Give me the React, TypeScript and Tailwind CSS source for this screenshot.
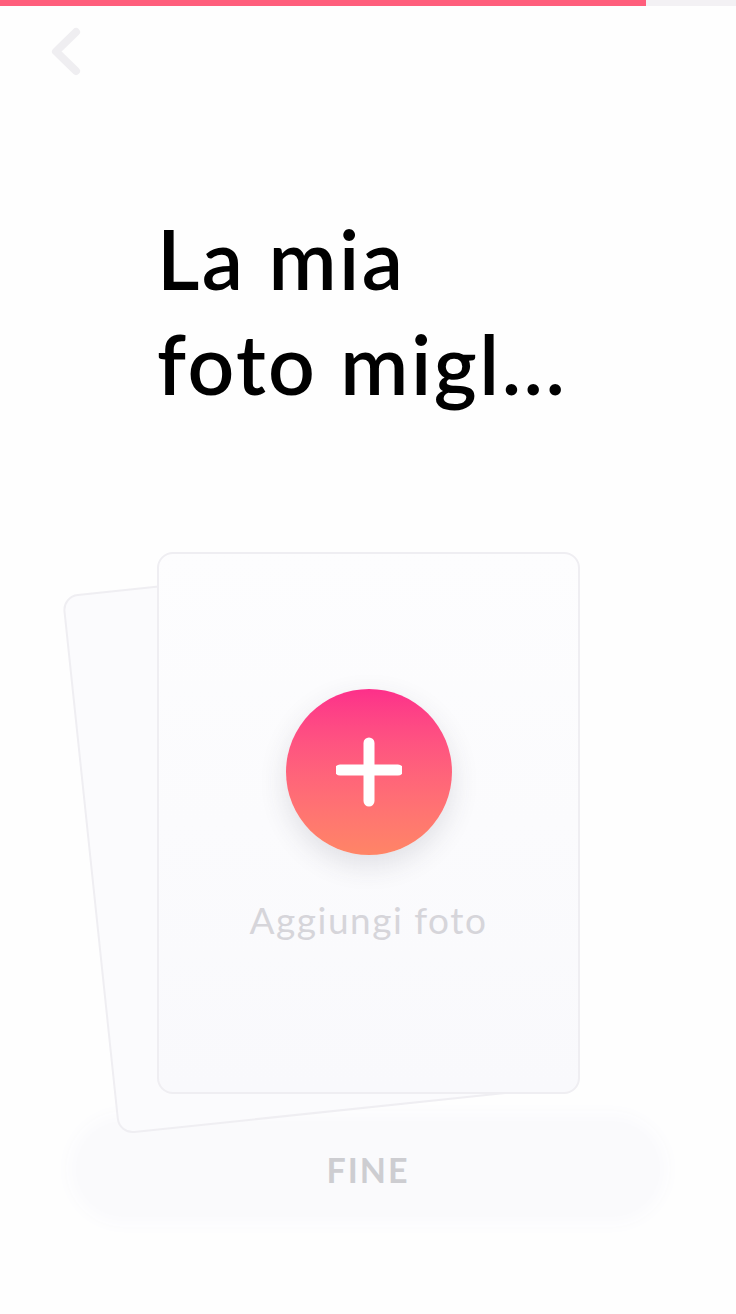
import { useState } from 'react'

const font = { fontFamily: 'Lato, "Noto Sans", sans-serif' }

function BackChevron() {
  return (
    <svg className="block" width="36" height="60" viewBox="0 0 36 60" fill="none">
      <path
        d="M28 10 L8 29.5 L28 49"
        stroke="#efeef1"
        strokeWidth="8"
        strokeLinecap="round"
        strokeLinejoin="round"
      />
    </svg>
  )
}

function AddButton() {
  return (
    <button className="w-[166px] h-[166px] rounded-full bg-gradient-to-b from-[#fd2f8a] to-[#ff8566] shadow-[0_10px_28px_rgba(60,60,80,0.14)] flex items-center justify-center">
      <svg width="66" height="70" viewBox="0 0 66 70" fill="none">
        <path d="M33 6 V64 M4 33 H62" stroke="#fff" strokeWidth="11" strokeLinecap="round" />
      </svg>
    </button>
  )
}

export default function App() {
  const [progress] = useState(646 / 736)

  return (
    <div className="w-[736px] h-[1314px] bg-[#fefefe] flex flex-col overflow-hidden" style={font}>
      {/* Progress */}
      <div className="h-[6px] bg-[#f3f1f4] w-full">
        <div className="h-full bg-[#ff5e7c]" style={{ width: `${progress * 100}%` }} />
      </div>

      {/* Header */}
      <div className="pl-[48px] pt-[16px] h-[100px]">
        <BackChevron />
      </div>

      {/* Title */}
      <h1 className="mt-[100px] pl-[157px] text-[82px] leading-[105px] font-semibold text-black tracking-[2.5px]">
        La mia
        <br />
        foto migl...
      </h1>

      {/* Photo cards */}
      <div className="mt-[136px] flex justify-center pl-[1px]">
        <div className="relative w-[423px] h-[542px]">
          <div className="absolute inset-0 -translate-x-[68px] translate-y-[20px] -rotate-[6deg] rounded-[16px] border-2 border-[#efeef2] bg-[#fbfbfd]" />
          <div className="relative h-full rounded-[16px] border-2 border-[#efeef2] bg-gradient-to-b from-[#fdfdfe] to-[#f9f9fc] flex flex-col items-center pt-[135px]">
            <AddButton />
            <span className="mt-[37px] text-[37px] text-[#d6d5da] tracking-[1.5px]">Aggiungi foto</span>
          </div>
        </div>
      </div>

      {/* Done */}
      <div className="mt-[27px] px-[76px]">
        <button className="w-full h-[96px] rounded-full bg-[#fafafc] shadow-[0_0_14px_10px_#fbfbfd] flex items-center justify-center">
          <span className="text-[34px] font-bold tracking-[2px] text-[#cdcdd1]">FINE</span>
        </button>
      </div>
    </div>
  )
}
